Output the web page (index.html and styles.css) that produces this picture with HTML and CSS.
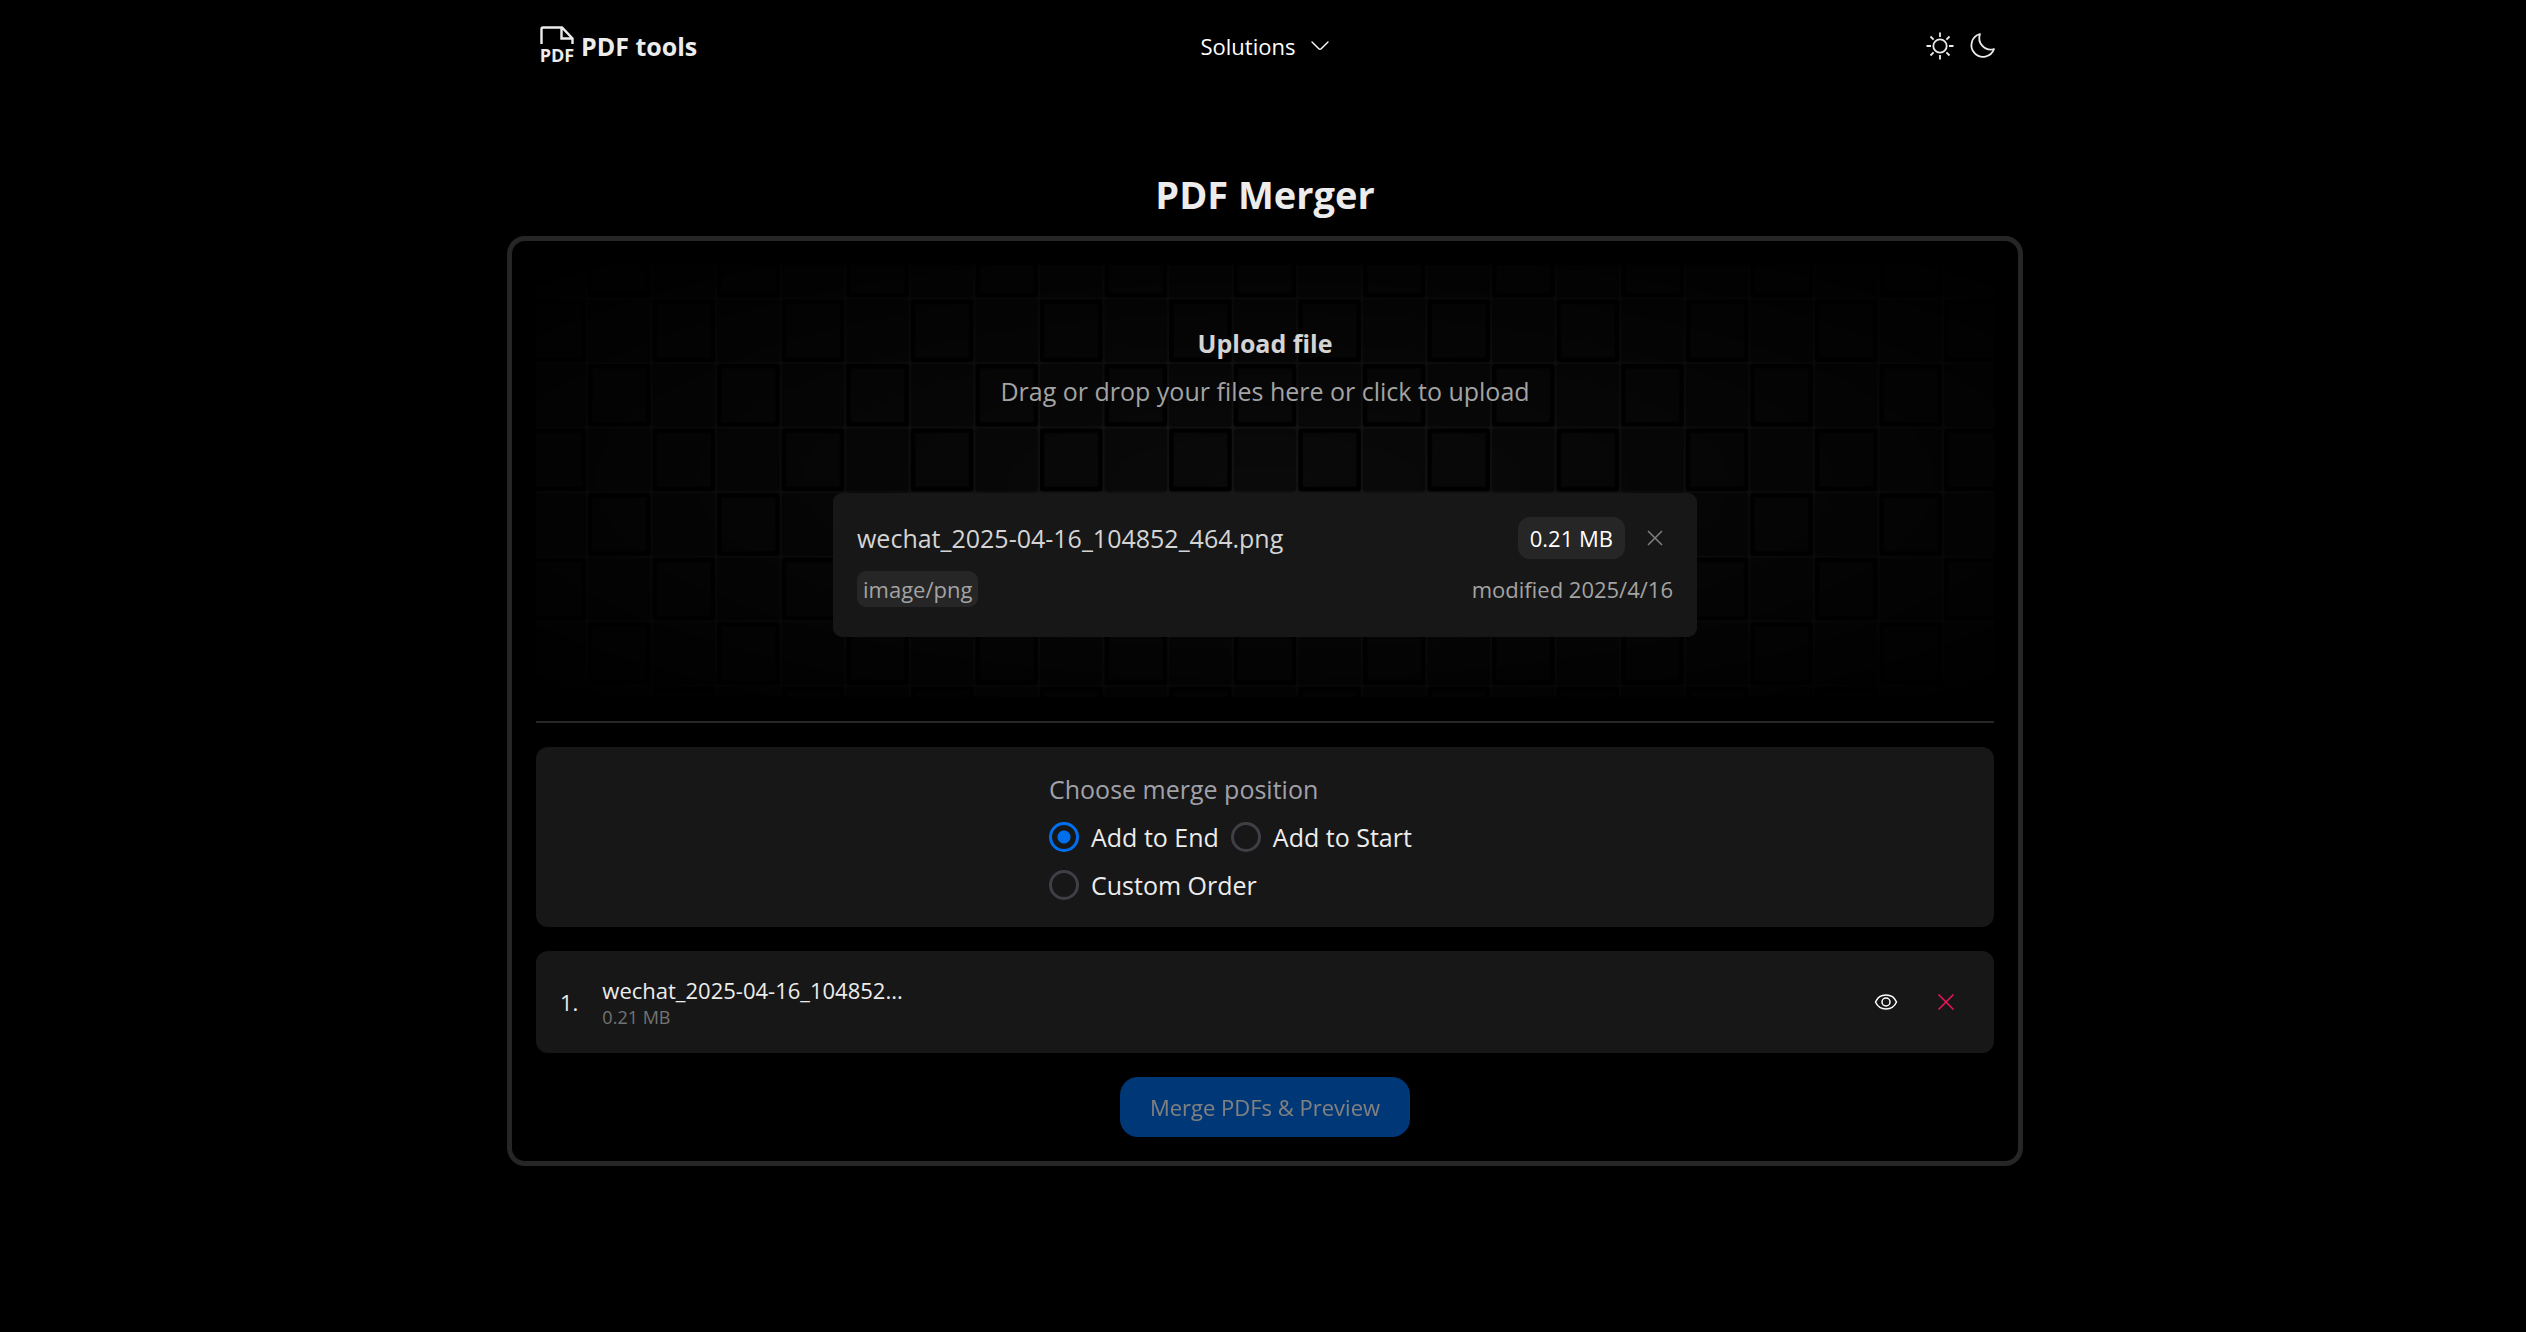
FILE: index.html
```html
<!DOCTYPE html>
<html lang="en">
<head>
<meta charset="utf-8">
<meta name="viewport" content="width=device-width, initial-scale=1">
<title>PDF Merger</title>
<link rel="stylesheet" href="styles.css">
</head>
<body>
<header class="header">
  <a class="brand" href="#">
    <svg class="brand-icon" viewBox="0 0 48 48" aria-hidden="true">
      <path d="M8.500 22V7Q8.500 5.500 10 5.500H29L39.500 16.500V22M28.500 5.500V16.500H39.500" fill="none" stroke="currentColor" stroke-width="2.400"/>
      <text class="brand-icon-text" x="24" y="40" text-anchor="middle">PDF</text>
    </svg>
    <span>PDF tools</span>
  </a>
  <nav>
    <button class="nav-button" type="button">Solutions
      <svg class="chevron" viewBox="0 0 18 18" aria-hidden="true"><path d="M1 5L7.800 11.800Q9 13 10.200 11.800L17 5" fill="none" stroke="currentColor" stroke-width="1.400" stroke-linecap="round"/></svg>
    </button>
  </nav>
  <div class="theme">
    <button class="icon-button icon-button-theme" type="button" aria-label="Light theme">
      <svg class="icon-30" viewBox="0 0 30 30" fill="none" stroke="currentColor" stroke-width="1.800" aria-hidden="true"><circle cx="15" cy="15" r="6.700"/><path d="M15 1.500V6M15 24V28.500M1.500 15H6M24 15H28.500M5.500 5.500L8.600 8.600M21.400 21.400L24.500 24.500M5.500 24.500L8.600 21.400M21.400 8.600L24.500 5.500"/></svg>
    </button>
    <button class="icon-button icon-button-theme" type="button" aria-label="Dark theme">
      <svg class="icon-30" viewBox="0 0 30 30" fill="none" stroke="currentColor" stroke-width="1.800" stroke-linejoin="round" aria-hidden="true"><path d="M13 3A11.600 11.600 0 1 0 27 18A11.500 11.500 0 0 1 13 3Z"/></svg>
    </button>
  </div>
</header>

<main class="main">
  <h1 class="title">PDF Merger</h1>
  <div class="card">
    <section class="upload">
      <svg class="upload-grid" aria-hidden="true">
        <defs>
          <pattern id="cells" x="-20.5" y="0" width="82" height="82" patternUnits="userSpaceOnUse">
            <rect width="82" height="82" fill="#171717"/>
            <rect x="41.5" y=".5" width="40" height="40" rx="2" fill="#0a0a0a"/>
            <rect x=".5" y="41.5" width="40" height="40" rx="2" fill="#0a0a0a"/>
            <rect x=".5" y=".5" width="40" height="40" rx="2" fill="#000"/>
            <rect x="3.5" y="3.5" width="34" height="34" fill="#0a0a0a"/>
            <rect x="41.5" y="41.5" width="40" height="40" rx="2" fill="#000"/>
            <rect x="44.5" y="44.5" width="34" height="34" fill="#0a0a0a"/>
          </pattern>
        </defs>
        <svg x="50%" overflow="visible">
          <g transform="translate(0 98) scale(1.575)"><rect x="-1000" y="-200" width="2000" height="800" fill="url(#cells)"/></g>
        </svg>
      </svg>
      <label class="upload-label" for="file-input">
        <span class="upload-title">Upload file</span>
        <span class="upload-hint">Drag or drop your files here or click to upload</span>
      </label>
      <input class="visually-hidden" id="file-input" type="file">
      <div class="file">
        <div class="file-row">
          <span class="file-name">wechat_2025-04-16_104852_464.png</span>
          <div class="file-side">
            <span class="size-chip">0.21 MB</span>
            <button class="icon-button icon-button-muted" type="button" aria-label="Clear file">
              <svg class="icon-16" viewBox="0 0 16 16" aria-hidden="true"><path d="M1 1L15 15M15 1L1 15" stroke="currentColor" stroke-width="1.500"/></svg>
            </button>
          </div>
        </div>
        <div class="file-row">
          <span class="type-chip">image/png</span>
          <span class="modified">modified 2025/4/16</span>
        </div>
      </div>
    </section>

    <hr class="divider">

    <div class="panel">
      <fieldset class="positions">
        <legend class="positions-legend">Choose merge position</legend>
        <div class="options">
          <label class="option"><input class="radio" type="radio" name="position" checked>Add to End</label>
          <label class="option"><input class="radio" type="radio" name="position">Add to Start</label>
          <label class="option"><input class="radio" type="radio" name="position">Custom Order</label>
        </div>
      </fieldset>
    </div>

    <div class="panel item">
      <span class="item-number">1.</span>
      <div class="item-text">
        <span class="item-name">wechat_2025-04-16_104852...</span>
        <span class="item-size">0.21 MB</span>
      </div>
      <div class="item-actions">
        <button class="icon-button icon-button-action" type="button" aria-label="Preview">
          <svg class="icon-24" viewBox="0 0 24 24" fill="none" stroke="currentColor" stroke-width="1.500" aria-hidden="true"><path d="M1.500 12C5.500 2.800 18.500 2.800 22.500 12C18.500 21.200 5.500 21.200 1.500 12Z" stroke-linejoin="round"/><circle cx="12" cy="12" r="4"/></svg>
        </button>
        <button class="icon-button icon-button-action icon-button-danger" type="button" aria-label="Remove">
          <svg class="icon-16" viewBox="0 0 16 16" aria-hidden="true"><path d="M.5.5L15.500 15.500M15.500.5L.5 15.500" stroke="currentColor" stroke-width="1.500"/></svg>
        </button>
      </div>
    </div>

    <button class="merge" type="button" disabled>Merge PDFs &amp; Preview</button>
  </div>
</main>
</body>
</html>
```

FILE: styles.css
```css
* {
  box-sizing: border-box;
}

body {
  margin: 0;
  padding-left: 4px;
  background: #000;
  color: #ececec;
  font-family: "Segoe UI", "Open Sans", "Noto Sans", sans-serif;
  font-size: 25px;
  line-height: 36px;
}

button {
  padding: 0;
  border: 0;
  background: none;
  color: inherit;
  font: inherit;
}

svg {
  display: block;
}

.header {
  display: grid;
  grid-template-columns: 1fr auto 1fr;
  align-items: center;
  max-width: 1464px;
  height: 92px;
  margin: 0 auto;
}

.brand {
  display: flex;
  align-items: center;
  color: inherit;
  font-size: 25px;
  font-weight: 700;
  text-decoration: none;
}

.brand-icon {
  width: 48px;
  height: 48px;
}

.brand-icon-text {
  fill: currentColor;
  font-size: 18px;
  font-weight: 700;
}

.nav-button {
  display: flex;
  align-items: center;
  gap: 16px;
  color: #fff;
  font-size: 22px;
}

.chevron {
  width: 18px;
  height: 18px;
}

.theme {
  display: flex;
  justify-content: flex-end;
  gap: 12px;
}

.icon-button {
  display: flex;
  align-items: center;
  justify-content: center;
  width: 36px;
  height: 36px;
}

.icon-button-theme {
  width: 30px;
}

.icon-button-muted {
  color: #808080;
}

.icon-button-action {
  width: 48px;
  height: 48px;
  color: #fff;
}

.icon-button-danger {
  color: #f31260;
}

.icon-30 {
  width: 30px;
  height: 30px;
}

.icon-24 {
  width: 24px;
  height: 24px;
}

.icon-16 {
  width: 16px;
  height: 16px;
}

.main {
  max-width: 1516px;
  margin: 0 auto;
  padding: 72px 0;
}

.title {
  margin: 0 0 12px;
  font-size: 38px;
  font-weight: 700;
  line-height: 60px;
  text-align: center;
}

.card {
  display: flex;
  flex-direction: column;
  gap: 24px;
  padding: 24px;
  border: 5px solid #262626;
  border-radius: 18px;
}

.upload {
  position: relative;
  display: flex;
  flex-direction: column;
  align-items: center;
  padding: 60px 24px;
}

.upload-grid {
  position: absolute;
  inset: 0;
  width: 100%;
  height: 100%;
  -webkit-mask-image: radial-gradient(ellipse at center, #fff, transparent);
  mask-image: radial-gradient(ellipse at center, #fff, transparent);
}

.upload-label {
  position: relative;
  display: flex;
  flex-direction: column;
  gap: 12px;
  text-align: center;
}

.upload-title {
  color: #d4d4d4;
  font-weight: 700;
}

.upload-hint {
  color: #a3a3a3;
}

.visually-hidden {
  position: absolute;
  width: 1px;
  height: 1px;
  overflow: hidden;
  opacity: 0;
}

.file {
  position: relative;
  display: flex;
  flex-direction: column;
  gap: 12px;
  width: 100%;
  max-width: 864px;
  margin-top: 84px;
  padding: 24px 24px 30px;
  border-radius: 9px;
  background: #171717;
}

.file-row,
.file-side {
  display: flex;
  align-items: center;
  justify-content: space-between;
  gap: 12px;
}

.file-name {
  color: #d4d4d4;
}

.size-chip {
  padding: 3px 12px;
  border-radius: 12px;
  background: #262626;
  color: #fff;
  font-size: 22px;
}

.type-chip {
  padding: 0 6px;
  border-radius: 9px;
  background: #262626;
}

.type-chip,
.modified {
  color: #a3a3a3;
  font-size: 22px;
}

.divider {
  width: 100%;
  height: 2px;
  margin: 0;
  border: 0;
  background: #262626;
}

.panel {
  padding: 24px;
  border-radius: 12px;
  background: #171717;
}

.positions {
  max-width: 432px;
  margin: 0 auto;
  padding: 0;
  border: 0;
}

.positions-legend {
  padding: 0 0 12px;
  color: #a1a1aa;
}

.options {
  display: flex;
  flex-wrap: wrap;
  gap: 12px;
}

.option {
  display: flex;
  align-items: center;
  gap: 12px;
}

.radio {
  width: 30px;
  height: 30px;
  margin: 0;
  border: 3px solid #3f3f46;
  border-radius: 50%;
  appearance: none;
}

.radio:checked {
  border-color: #006fee;
  background: radial-gradient(circle, #006fee 6px, transparent 7px);
}

.item {
  display: flex;
  align-items: center;
  gap: 24px;
}

.item-number,
.item-name {
  font-size: 22px;
  line-height: 30px;
}

.item-text {
  display: flex;
  flex: 1;
  flex-direction: column;
}

.item-size {
  color: #737373;
  font-size: 18px;
  line-height: 24px;
}

.item-actions {
  display: flex;
  gap: 12px;
}

.merge {
  align-self: center;
  height: 60px;
  padding: 0 30px;
  border-radius: 18px;
  background: #006fee;
  color: #fff;
  font-size: 22px;
  opacity: 0.5;
}
```
